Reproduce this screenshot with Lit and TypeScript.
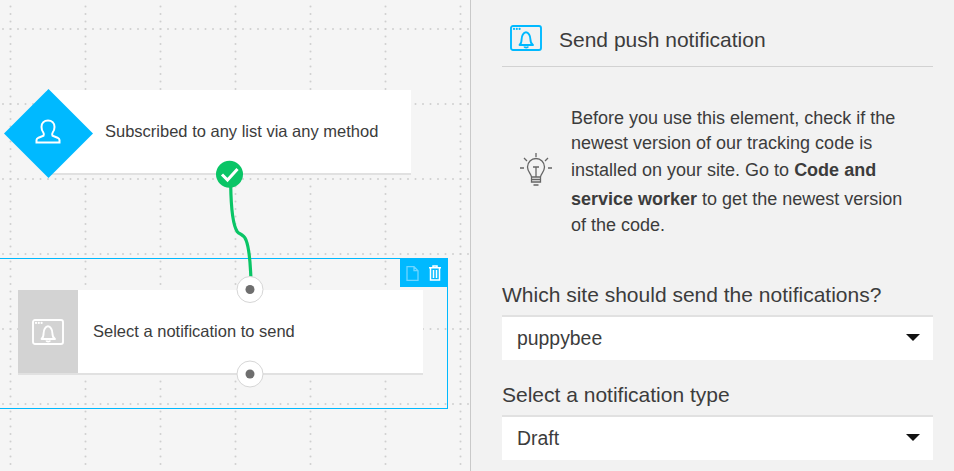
import { LitElement, html, css, svg } from "lit";
import { customElement } from "lit/decorators.js";

const bell = (stroke: string) => svg`
  <rect x="1" y="1" width="30" height="24" rx="2" fill="none" stroke="${stroke}" stroke-width="1.900"/>
  <circle cx="4" cy="3.900" r="1.100" fill="${stroke}"/><circle cx="6.800" cy="3.900" r="1.100" fill="${stroke}"/><circle cx="9.600" cy="3.900" r="1.100" fill="${stroke}"/>
  <path d="M9.500 20h13.500c-2-1.400-2.600-3-2.600-5.800 0-3.400-1.900-7-4.400-7s-4.400 3.600-4.400 7c0 2.800-.2 4.400-2.100 5.800Z" fill="none" stroke="${stroke}" stroke-width="1.900" stroke-linejoin="round"/>
  <path d="M14.200 21.500c.5 1.400 3.500 1.400 4 0" fill="none" stroke="${stroke}" stroke-width="1.800"/>`;

@customElement("app-root")
export class AppRoot extends LitElement {
  static styles = css`
    :host { display: block; width: 954px; height: 471px; overflow: hidden; font-family: "Liberation Sans", Arial, sans-serif; color: #3c3c3c; background: #f2f2f2; }
    .page { display: flex; width: 954px; height: 471px; }
    .canvas { position: relative; flex: 0 0 470px; height: 471px; background: #f5f5f5; border-right: 1px solid #c9c9c9; overflow: hidden; }
    .layer { position: absolute; left: 0; top: 0; }
    .node { position: absolute; background: #fff; border-bottom: 2px solid #e1e1e1; display: flex; align-items: center; font-size: 16.500px; box-sizing: border-box; }
    .n1 { left: 46px; top: 90px; width: 365px; height: 85px; padding-left: 59px; }
    .n2 { left: 18px; top: 290px; width: 405px; height: 85px; }
    .thumb { width: 60px; align-self: stretch; background: #d3d3d3; display: flex; align-items: center; justify-content: center; margin-right: 15px; }
    .select { position: absolute; left: -10px; top: 258px; width: 458px; height: 151px; border: 1px solid #00b9ff; box-sizing: border-box; }
    .tools { position: absolute; right: 0; top: 0; width: 47px; height: 28px; background: #00b9ff; display: flex; align-items: center; justify-content: center; gap: 9px; }
    .panel { flex: 1; padding: 0 21px 0 31px; min-width: 0; }
    .head { height: 67px; border-bottom: 1px solid #d2d2d2; display: flex; align-items: center; gap: 17px; padding: 14px 0 0 8px; box-sizing: border-box; font-size: 21px; }
    .head svg { margin-top: -4px; }
    .tip { display: flex; align-items: center; padding: 38px 0 0 18px; gap: 19px; height: 134px; font-size: 18px; line-height: 25px; }
    .tip svg { margin-bottom: 5px; }
    .tip p { margin: 0; width: 340px; }
    .tip b { line-height: 28.500px; }
    label { display: block; font-size: 21px; line-height: 24px; margin-bottom: 8px; }
    .f1 { margin-top: 44px; }
    .f2 { margin-top: 23px; }
    .sel { height: 45px; background: #fff; border-top: 2px solid #e1e1e1; box-sizing: border-box; display: flex; align-items: center; justify-content: space-between; padding: 0 13px 0 15px; font-size: 19.400px; }
    .arr { width: 0; height: 0; border-left: 7.500px solid transparent; border-right: 7.500px solid transparent; border-top: 7.500px solid #111; margin-bottom: 3px; }
  `;

  grid() {
    const dots = [];
    for (let y = 29; y < 471; y += 75) for (let x = 3; x < 470; x += 7.5) dots.push(svg`<circle cx="${x}" cy="${y}" r="1" fill="#cfcfcf"/>`);
    for (let x = 10.5; x < 470; x += 75) for (let y = 6.5; y < 471; y += 7.5) dots.push(svg`<circle cx="${x}" cy="${y}" r="1" fill="#cfcfcf"/>`);
    return html`<svg class="layer" width="470" height="471">${dots}</svg>`;
  }

  render() {
    return html`<div class="page">
      <div class="canvas">
        ${this.grid()}
        <div class="node n1">Subscribed to any list via any method</div>
        <div class="node n2"><div class="thumb"><svg width="32" height="26" viewBox="0 0 32 26">${bell("#fff")}</svg></div>Select a notification to send</div>
        <div class="select"><div class="tools">
          <svg width="13" height="15" viewBox="0 0 13 15"><path d="M1 .7h7l4 4v9.600H1Z M8 .7v4h4" fill="none" stroke="#6fd5ff" stroke-width="1.300"/></svg>
          <svg width="14" height="16" viewBox="0 0 14 16"><path d="M1 2.700h12M5 2.500V1h4v1.500M2.500 3v12h9V3M5.500 5v8M8.500 5v8" fill="none" stroke="#fff" stroke-width="1.500"/></svg>
        </div></div>
        <svg class="layer" width="470" height="471">
          <path d="M4 133.500 48.500 89 93 133.500 48.500 178Z" fill="#00b9ff"/>
          <path d="M36.500 142.500v-2.500c0-1 .7-1.700 2-2.300l5-2c.6-1.200.5-2.200-.2-3.200-1-1.300-1.800-3-1.800-5.500 0-3.800 2.700-6.500 6.500-6.500s6.500 2.700 6.500 6.500c0 2.500-.8 4.200-1.800 5.500-.7 1-.8 2-.2 3.200l5 2c1.300.6 2 1.300 2 2.300v2.500Z" fill="none" stroke="#fff" stroke-width="2"/>
          <path d="M230.700 185C231 205 232 224 237.300 231.700 240 235 243 233 246 240 250 250 250 262 251 279" fill="none" stroke="#0ac566" stroke-width="3.200"/>
          <circle cx="229.500" cy="174.300" r="13.500" fill="#0ac566"/>
          <path d="M222 174.500l5.500 5.500 10-11" fill="none" stroke="#fff" stroke-width="3"/>
          <circle cx="250" cy="289.500" r="13" fill="#fff" stroke="#d6d6d6"/><circle cx="250" cy="289.500" r="4.500" fill="#6e6e6e"/>
          <circle cx="250" cy="374" r="13" fill="#fff" stroke="#d6d6d6"/><circle cx="250" cy="374" r="4.500" fill="#6e6e6e"/>
        </svg>
      </div>
      <div class="panel">
        <div class="head"><svg width="32" height="26" viewBox="0 0 32 26">${bell("#00b9ff")}</svg>Send push notification</div>
        <div class="tip">
          <svg width="32" height="36" viewBox="0 0 32 36" fill="none" stroke="#666" stroke-width="1.300">
            <path d="M11.500 25c0-3-4-5-4-10a8.500 8.500 0 0 1 17 0c0 5-4 7-4 10ZM11.500 25v5h9v-5M11.500 27.500h9M13.500 33h5M13 15h6M16 15v10M16 1v4M4 6l3 3M28 6l-3 3M0 16h4M28 16h4"/>
          </svg>
          <p>Before you use this element, check if the newest version of our tracking code is installed on your site. Go to <b>Code and service worker</b> to get the newest version of the code.</p>
        </div>
        <label class="f1">Which site should send the notifications?</label>
        <div class="sel">puppybee<span class="arr"></span></div>
        <label class="f2">Select a notification type</label>
        <div class="sel">Draft<span class="arr"></span></div>
      </div>
    </div>`;
  }
}
